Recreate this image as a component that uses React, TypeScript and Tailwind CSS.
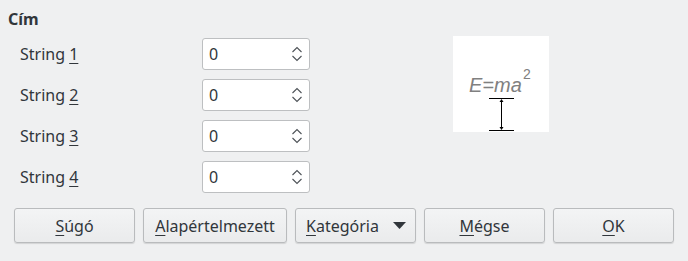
import React from "react";

const font = { fontFamily: '"Noto Sans", "Open Sans", sans-serif' };

function Spin() {
  return (
    <svg width="12" height="20" viewBox="0 0 12 20" className="absolute right-[6px] top-[5px]">
      <path d="M1.5 8 L6 3.5 L10.5 8" fill="none" stroke="#4d5257" strokeWidth="1.1" />
      <path d="M1.5 12 L6 16.5 L10.5 12" fill="none" stroke="#4d5257" strokeWidth="1.1" />
    </svg>
  );
}

function Row({ n }: { n: string }) {
  return (
    <div className="flex items-center h-[32px]">
      <div className="w-[182px] text-[16px] text-[#31363b]">
        String <span className="underline underline-offset-[3px] decoration-1">{n}</span>
      </div>
      <div className="relative w-[108px] h-[32px] bg-white border border-[#bdbfc1] rounded-[3px] flex items-center pl-[6px] text-[16px] text-[#31363b]">
        0
        <Spin />
      </div>
    </div>
  );
}

function Btn({ w, children }: { w: string; children: React.ReactNode }) {
  return (
    <div
      className={`${w} h-[35px] rounded-[3px] border border-[#b9bbbd] bg-gradient-to-b from-[#f3f4f5] to-[#eaebec] shadow-[0_1px_1px_rgba(0,0,0,0.12)] flex items-center justify-center text-[16px] text-[#31363b]`}
    >
      {children}
    </div>
  );
}

const U = ({ c }: { c: string }) => (
  <span className="underline underline-offset-[3px] decoration-1">{c}</span>
);

export default function App() {
  return (
    <div style={font} className="w-[688px] h-[261px] bg-[#eff0f1] overflow-hidden">
      <div className="pl-[8px] pt-[10px] h-[29px] text-[16px] leading-[19px] font-bold text-[#31363b]">
        Cím
      </div>
      <div className="flex items-start pt-[7px]">
        <div className="flex flex-col gap-[9px] pl-[20px] pt-[2px]">
          <Row n="1" />
          <Row n="2" />
          <Row n="3" />
          <Row n="4" />
        </div>
        <div className="ml-[143px] w-[96px] h-[96px] bg-white">
          <svg width="96" height="96" viewBox="0 0 96 96">
            <text
              x="16"
              y="56"
              fill="#808080"
              fontSize="20"
              fontStyle="italic"
              fontFamily='"Liberation Sans", Arial, sans-serif'
            >
              E=ma
            </text>
            <text
              x="70"
              y="43"
              fill="#808080"
              fontSize="14"
              fontFamily='"Liberation Sans", Arial, sans-serif'
            >
              2
            </text>
            <line x1="36" y1="62.5" x2="61" y2="62.5" stroke="#000" strokeWidth="1" />
            <line x1="36" y1="94.5" x2="61" y2="94.5" stroke="#000" strokeWidth="1" />
            <line x1="48.5" y1="64" x2="48.5" y2="93" stroke="#000" strokeWidth="1" />
            <path d="M46.5 66 L48.5 63 L50.5 66 Z" fill="#000" />
            <path d="M46.5 91 L48.5 94 L50.5 91 Z" fill="#000" />
          </svg>
        </div>
      </div>
      <div className="flex gap-[8px] pl-[14px] mt-[15px]">
        <Btn w="w-[121px]">
          <U c="S" />úgó
        </Btn>
        <Btn w="w-[144px]">
          <U c="A" />lapértelmezett
        </Btn>
        <Btn w="w-[121px]">
          <div className="flex items-center w-full pl-[10px]">
            <span>
              <U c="K" />ategória
            </span>
            <svg width="13" height="7" viewBox="0 0 13 7" className="ml-[14px]">
              <path d="M0 0 L13 0 L6.5 7 Z" fill="#31363b" />
            </svg>
          </div>
        </Btn>
        <Btn w="w-[121px]">
          <U c="M" />égse
        </Btn>
        <Btn w="w-[121px]">
          <U c="O" />K
        </Btn>
      </div>
    </div>
  );
}
